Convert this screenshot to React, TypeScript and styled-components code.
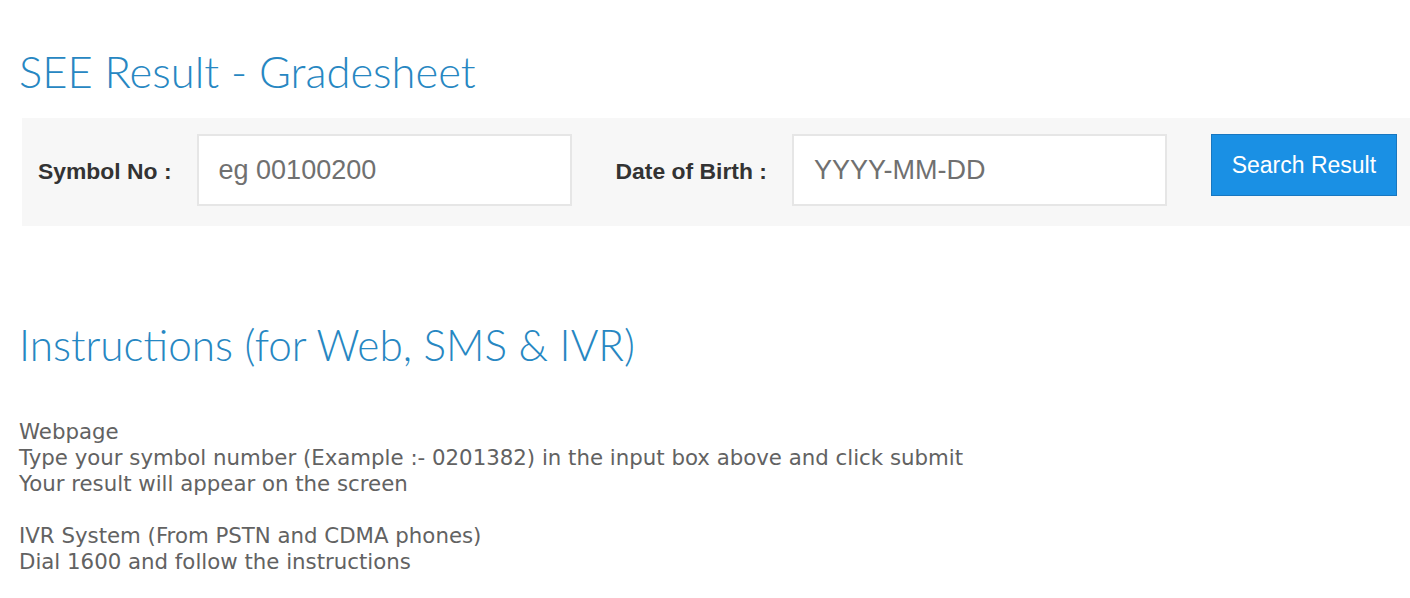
import styled, { createGlobalStyle } from "styled-components";

const GlobalStyle = createGlobalStyle`
  body {
    margin: 0;
    background: #ffffff;
  }
`;

const Page = styled.div`
  padding: 46px 0 0 19px;
`;

const Heading = styled.h2<{ $size: number }>`
  margin: 0;
  font-family: "Lato", sans-serif;
  font-weight: 300;
  font-size: ${(p) => p.$size}px;
  line-height: 50px;
  color: #2787c2;
`;

const SearchBar = styled.form`
  display: flex;
  align-items: flex-start;
  margin: 22px 0 0 3px;
  padding: 16px 12px 20px 16px;
  background: #f7f7f7;
  font-family: "Liberation Sans", Arial, sans-serif;
`;

const Field = styled.div`
  display: flex;
  align-items: center;
  flex-shrink: 0;
  gap: 25px;
  margin-right: 44px;
`;

const Label = styled.label`
  flex-shrink: 0;
  white-space: nowrap;
  font-size: 22.9px;
  font-weight: bold;
  color: #333333;
  padding-top: 2px;
`;

const Input = styled.input`
  box-sizing: border-box;
  flex-shrink: 0;
  width: 375px;
  height: 72px;
  padding: 0 20px;
  border: 2px solid #e6e6e6;
  background: #ffffff;
  font-family: "Liberation Sans", Arial, sans-serif;
  font-size: 27px;
  color: #555555;
  outline: none;

  &::placeholder {
    color: #707070;
  }
`;

const Button = styled.button`
  box-sizing: border-box;
  flex-shrink: 0;
  width: 186px;
  height: 62px;
  border: 1px solid #1877c0;
  background: #1a90e4;
  color: #ffffff;
  font-family: "Liberation Sans", Arial, sans-serif;
  font-size: 23px;
  cursor: pointer;
`;

const Instructions = styled.section`
  margin-top: 94px;
`;

const Body = styled.div`
  margin-top: 49px;
  font-family: "DejaVu Sans", Verdana, sans-serif;
  font-size: 21.3px;
  line-height: 26px;
  color: #626262;
`;

const Line = styled.div``;

const Gap = styled.div`
  height: 26px;
`;

export default function App() {
  return (
    <Page>
      <GlobalStyle />
      <Heading $size={43.5}>SEE Result - Gradesheet</Heading>
      <SearchBar onSubmit={(e) => e.preventDefault()}>
        <Field>
          <Label>Symbol No :</Label>
          <Input placeholder="eg 00100200" />
        </Field>
        <Field>
          <Label>Date of Birth :</Label>
          <Input placeholder="YYYY-MM-DD" />
        </Field>
        <Button type="submit">Search Result</Button>
      </SearchBar>
      <Instructions>
        <Heading $size={42.3}>Instructions (for Web, SMS &amp; IVR)</Heading>
        <Body>
          <Line>Webpage</Line>
          <Line>
            Type your symbol number (Example :- 0201382) in the input box above
            and click submit
          </Line>
          <Line>Your result will appear on the screen</Line>
          <Gap />
          <Line>IVR System (From PSTN and CDMA phones)</Line>
          <Line>Dial 1600 and follow the instructions</Line>
        </Body>
      </Instructions>
    </Page>
  );
}
